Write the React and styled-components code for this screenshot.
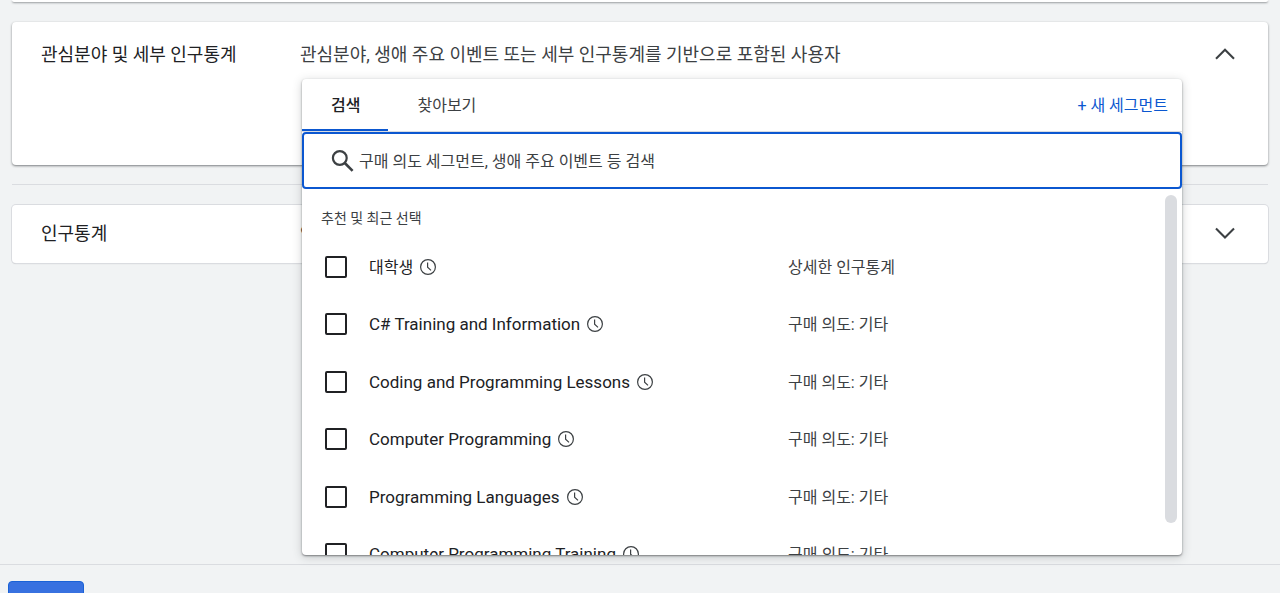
import React from "react";
import styled, { createGlobalStyle } from "styled-components";

const GlobalStyle = createGlobalStyle`
  * { box-sizing: border-box; }
  body {
    margin: 0;
    background: #f1f3f4;
    color: #202124;
    font-family: Roboto, "Noto Sans CJK KR", sans-serif;
    font-size: 16px;
    line-height: 24px;
  }
  button, input { font: inherit; color: inherit; }
`;

const Page = styled.div`
  display: flex;
  flex-direction: column;
  height: 100vh;
  overflow: hidden;
`;

const Main = styled.main`
  flex: 1;
  min-height: 0;
  padding: 0 12px;
`;

const Card = styled.section`
  display: grid;
  grid-template-columns: 259px minmax(0, 1fr) 86px;
  align-items: start;
  padding: ${(p) => (p.$open ? "17px" : "13px")} 0 13px 29px;
  min-height: ${(p) => (p.$open ? "143px" : "58px")};
  background: #fff;
  border-radius: 4px;
  box-shadow: ${(p) =>
    p.$open
      ? "0 1px 2px rgba(60, 64, 67, 0.5), 0 1px 3px rgba(60, 64, 67, 0.2)"
      : "0 0 0 1px #dadce0, 0 1px 1px rgba(60, 64, 67, 0.25)"};
`;

const PreviousCard = styled.div`
  height: 2px;
  margin-bottom: 20px;
  background: #fff;
  border-radius: 0 0 4px 4px;
  box-shadow: 0 1px 2px rgba(60, 64, 67, 0.5);
`;

const Divider = styled.hr`
  height: 1px;
  margin: 19px 0 20px;
  border: 0;
  background: #dadce0;
`;

const CardTitle = styled.h2`
  margin: 0;
  padding-top: 4px;
  font-size: 18px;
  line-height: 24px;
  font-weight: 400;
`;

const CardContent = styled.div`
  position: relative;
  z-index: ${(p) => (p.$raised ? 2 : "auto")};
  padding-top: 4px;
  color: #3c4043;
  font-size: 18px;
  line-height: 24px;
  white-space: nowrap;
`;

const ToggleButton = styled.button`
  display: flex;
  justify-self: center;
  margin: 3px 0 0;
  padding: 0;
  border: 0;
  background: none;
  color: #3c4043;
  cursor: pointer;
`;

const Popup = styled.div`
  position: absolute;
  top: 40px;
  left: 2px;
  right: 0;
  display: flex;
  flex-direction: column;
  height: 476px;
  overflow: hidden;
  background: #fff;
  border-radius: 4px;
  box-shadow: 0 1px 2px rgba(60, 64, 67, 0.6), 0 2px 10px rgba(60, 64, 67, 0.25);
  font-size: 16px;
`;

const PopupHeader = styled.div`
  display: flex;
  align-items: center;
  height: 53px;
  padding-right: 14px;
  border-bottom: 1px solid #dadce0;
`;

const Tabs = styled.div`
  display: flex;
  flex: 1;
  align-self: stretch;
`;

const Tab = styled.button`
  padding: 4px 28px 0 29px;
  border: 0;
  border-bottom: 2px solid ${(p) => (p.$active ? "#0b57d0" : "transparent")};
  background: none;
  color: ${(p) => (p.$active ? "#202124" : "#3c4043")};
  font-weight: ${(p) => (p.$active ? 500 : 400)};
  cursor: pointer;
`;

const NewSegment = styled.button`
  padding: 2px 0 0;
  border: 0;
  background: none;
  color: #0b57d0;
  cursor: pointer;
`;

const SearchBox = styled.label`
  display: flex;
  align-items: center;
  gap: 2px;
  flex: none;
  height: 57px;
  padding: 0 25px;
  border: 2px solid #0b57d0;
  border-radius: 4px;
  color: #3c4043;
`;

const SearchInput = styled.input`
  flex: 1;
  min-width: 0;
  padding: 2px 0 0;
  border: 0;
  outline: 0;
  background: none;
  &::placeholder { color: #3c4043; opacity: 1; }
`;

const Results = styled.div`
  display: flex;
  flex: 1;
  min-height: 0;
`;

const ResultsBody = styled.div`
  flex: 1;
  min-width: 0;
  overflow: hidden;
`;

const ScrollThumb = styled.div`
  width: 12px;
  height: 328px;
  margin: 6px 5px 0 0;
  border-radius: 6px;
  background: #dadce0;
`;

const GroupTitle = styled.h3`
  margin: 0;
  padding: 17px 19px 8px;
  color: #3c4043;
  font-size: 14px;
  line-height: 24px;
  font-weight: 400;
`;

const SegmentList = styled.ul`
  display: grid;
  grid-auto-rows: 1fr;
  height: 345px;
  margin: 0;
  padding: 0;
  list-style: none;
`;

const Segment = styled.li`
  display: grid;
  grid-template-columns: 463px minmax(0, 1fr);
  align-items: center;
  padding-left: 23px;
`;

const SegmentLabel = styled.label`
  display: flex;
  align-items: center;
`;

const Checkbox = styled.input`
  appearance: none;
  width: 22px;
  height: 22px;
  margin: 0 22px 0 0;
  border: 2px solid #202124;
  border-radius: 2px;
  background: #fff;
`;

const SegmentName = styled.span`
  margin-right: 6px;
  padding-top: ${(p) => (p.lang === "en" ? "0" : "2px")};
  color: #202124;
  font-size: ${(p) => (p.lang === "en" ? "17px" : "16px")};
`;

const Category = styled.span`
  padding-top: 2px;
  color: #3c4043;
`;

const Footer = styled.footer`
  flex: none;
  height: 29px;
  padding: 16px 8px 0;
  border-top: 1px solid #dadce0;
`;

const SaveButton = styled.button`
  width: 76px;
  height: 36px;
  border: 1px solid #1a62d6;
  border-radius: 4px;
  background: #3871e0;
`;

function Chevron({ up }) {
  return (
    <svg width="24" height="24" viewBox="0 0 24 24" fill="none" stroke="currentColor" strokeWidth="2.1" aria-hidden="true">
      <path d={up ? "M3 16.8L12 7.8L21 16.8" : "M3 7.6L12 16.6L21 7.6"} />
    </svg>
  );
}

function SearchIcon() {
  return (
    <svg width="28" height="28" viewBox="0 0 28 28" fill="none" stroke="currentColor" strokeWidth="2.2" aria-hidden="true">
      <circle cx="10.8" cy="11" r="6.9" />
      <path d="M15.8 16L23.6 23.8" strokeWidth="2.6" />
    </svg>
  );
}

function ClockIcon() {
  return (
    <svg width="18" height="18" viewBox="0 0 18 18" fill="none" stroke="#3c4043" strokeWidth="1.2" aria-hidden="true">
      <circle cx="9" cy="9" r="7.4" />
      <path d="M8.6 4.4V9.3L12 12.4" />
    </svg>
  );
}

const segments = [
  { name: "대학생", lang: "ko", category: "상세한 인구통계" },
  { name: "C# Training and Information", lang: "en", category: "구매 의도: 기타" },
  { name: "Coding and Programming Lessons", lang: "en", category: "구매 의도: 기타" },
  { name: "Computer Programming", lang: "en", category: "구매 의도: 기타" },
  { name: "Programming Languages", lang: "en", category: "구매 의도: 기타" },
  { name: "Computer Programming Training", lang: "en", category: "구매 의도: 기타" },
];

function SegmentPicker() {
  return (
    <Popup>
      <PopupHeader>
        <Tabs role="tablist">
          <Tab type="button" role="tab" aria-selected="true" $active>검색</Tab>
          <Tab type="button" role="tab" aria-selected="false">찾아보기</Tab>
        </Tabs>
        <NewSegment type="button">+ 새 세그먼트</NewSegment>
      </PopupHeader>
      <SearchBox>
        <SearchIcon />
        <SearchInput type="text" aria-label="검색" placeholder="구매 의도 세그먼트, 생애 주요 이벤트 등 검색" />
      </SearchBox>
      <Results>
        <ResultsBody>
          <GroupTitle>추천 및 최근 선택</GroupTitle>
          <SegmentList>
            {segments.map((s) => (
              <Segment key={s.name}>
                <SegmentLabel>
                  <Checkbox type="checkbox" />
                  <SegmentName lang={s.lang}>{s.name}</SegmentName>
                  <ClockIcon />
                </SegmentLabel>
                <Category>{s.category}</Category>
              </Segment>
            ))}
          </SegmentList>
        </ResultsBody>
        <ScrollThumb />
      </Results>
    </Popup>
  );
}

export default function App() {
  return (
    <Page lang="ko">
      <GlobalStyle />
      <Main>
        <PreviousCard />
        <Card $open>
          <CardTitle>관심분야 및 세부 인구통계</CardTitle>
          <CardContent $raised>
            관심분야, 생애 주요 이벤트 또는 세부 인구통계를 기반으로 포함된 사용자
            <SegmentPicker />
          </CardContent>
          <ToggleButton type="button" aria-label="접기" aria-expanded="true">
            <Chevron up />
          </ToggleButton>
        </Card>
        <Divider />
        <Card>
          <CardTitle>인구통계</CardTitle>
          <CardContent>연령</CardContent>
          <ToggleButton type="button" aria-label="펼치기" aria-expanded="false">
            <Chevron />
          </ToggleButton>
        </Card>
      </Main>
      <Footer>
        <SaveButton type="button" aria-label="저장" />
      </Footer>
    </Page>
  );
}
